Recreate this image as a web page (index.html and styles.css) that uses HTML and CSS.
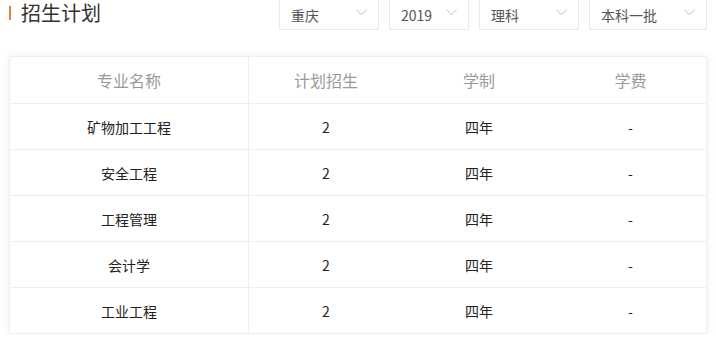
FILE: index.html
```html
<!DOCTYPE html>
<html lang="zh">
<head>
<meta charset="utf-8">
<link rel="stylesheet" href="styles.css">
</head>
<body>
<div class="page">
  <div class="head">
    <h2 class="title"><span class="bar"></span>招生计划</h2>
    <div class="filters">
      <div class="sel w100"><span>重庆</span><svg class="chev" viewBox="0 0 11 7"><polyline points="0.5,0.5 5.5,6 10.5,0.5"/></svg></div>
      <div class="sel w80"><span>2019</span><svg class="chev" viewBox="0 0 11 7"><polyline points="0.5,0.5 5.5,6 10.5,0.5"/></svg></div>
      <div class="sel w100"><span>理科</span><svg class="chev" viewBox="0 0 11 7"><polyline points="0.5,0.5 5.5,6 10.5,0.5"/></svg></div>
      <div class="sel w118"><span>本科一批</span><svg class="chev" viewBox="0 0 11 7"><polyline points="0.5,0.5 5.5,6 10.5,0.5"/></svg></div>
    </div>
  </div>
  <div class="card">
    <div class="row th"><div class="c first">专业名称</div><div class="c">计划招生</div><div class="c">学制</div><div class="c">学费</div></div>
    <div class="row"><div class="c first">矿物加工工程</div><div class="c">2</div><div class="c">四年</div><div class="c">-</div></div>
    <div class="row"><div class="c first">安全工程</div><div class="c">2</div><div class="c">四年</div><div class="c">-</div></div>
    <div class="row"><div class="c first">工程管理</div><div class="c">2</div><div class="c">四年</div><div class="c">-</div></div>
    <div class="row"><div class="c first">会计学</div><div class="c">2</div><div class="c">四年</div><div class="c">-</div></div>
    <div class="row last"><div class="c first">工业工程</div><div class="c">2</div><div class="c">四年</div><div class="c">-</div></div>
  </div>
</div>
</body>
</html>
```
FILE: styles.css
```css
* { box-sizing: border-box; }
html, body { margin: 0; padding: 0; background: #fff; }
body { font-family: "Noto Sans CJK SC", "Noto Sans", sans-serif; color: #333; }
.page { width: 716px; padding: 0 9px 0 9px; }
.head { display: flex; justify-content: space-between; align-items: flex-start; height: 30px; }
.title { margin: 0; display: flex; align-items: center; font-size: 20px; font-weight: normal; line-height: 26px; color: #333; }
.bar { display: inline-block; width: 2px; height: 14px; background: #e9803f; margin-right: 10px; }
.filters { display: flex; gap: 10px; margin-top: -1px; }
.sel { height: 31px; border: 1px solid #ebebeb; display: flex; align-items: center; justify-content: space-between; padding: 0 11px 0 11px; font-size: 14px; color: #555; }
.w100 { width: 100px; }
.w80 { width: 80px; }
.w118 { width: 118px; }
.chev { width: 11px; height: 7px; fill: none; stroke: #c4c4c4; stroke-width: 1; margin-top: -4px; }
.card { margin-top: 26px; width: 698px; border: 1px solid #eee; box-shadow: 0 0 8px rgba(0,0,0,0.07); background: #fff; }
.row { display: grid; grid-template-columns: 239px 154px 152px 1fr; height: 46px; border-bottom: 1px solid #eee; }
.row.th { height: 47px; }
.row.last { border-bottom: none; height: 45px; }
.c { display: flex; align-items: center; justify-content: center; font-size: 14px; color: #222; }
.c.first { border-right: 1px solid #eee; }
.th .c { font-size: 16px; color: #999; }
```
